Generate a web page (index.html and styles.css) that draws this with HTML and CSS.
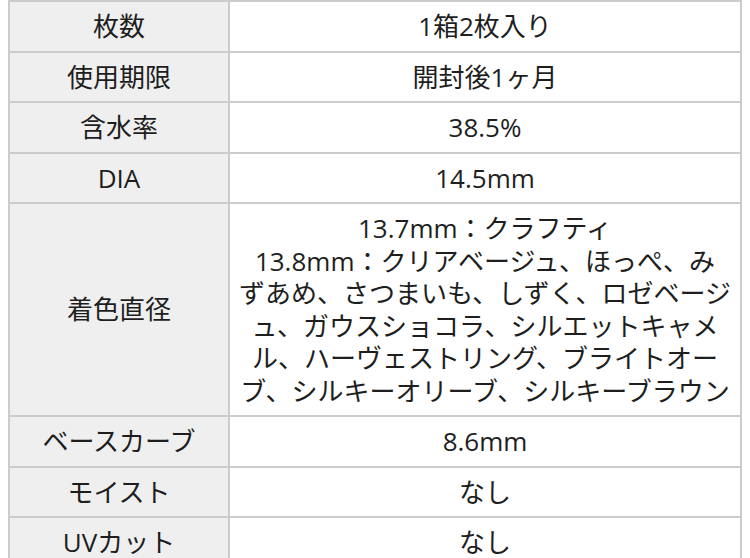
FILE: index.html
```html
<!DOCTYPE html>
<html lang="ja">
<head>
<meta charset="utf-8">
<link rel="stylesheet" href="styles.css">
</head>
<body>
<table class="spec">
  <colgroup><col class="col-label"><col class="col-value"></colgroup>
  <tr><th>枚数</th><td>1箱2枚入り</td></tr>
  <tr><th>使用期限</th><td>開封後1ヶ月</td></tr>
  <tr><th>含水率</th><td>38.5%</td></tr>
  <tr><th>DIA</th><td>14.5mm</td></tr>
  <tr><th>着色直径</th><td>13.7mm：クラフティ<br>13.8mm：クリアベージュ、ほっぺ、み<br>ずあめ、さつまいも、しずく、ロゼベージ<br>ュ、ガウスショコラ、シルエットキャメ<br>ル、ハーヴェストリング、ブライトオー<br>ブ、シルキーオリーブ、シルキーブラウン</td></tr>
  <tr><th>ベースカーブ</th><td>8.6mm</td></tr>
  <tr><th>モイスト</th><td>なし</td></tr>
  <tr><th>UVカット</th><td>なし</td></tr>
</table>
</body>
</html>
```

FILE: styles.css
```css
html, body {
  margin: 0;
  background: #ffffff;
}
body {
  padding: 0 8px;
  font-family: "Open Sans", "Noto Sans CJK JP", sans-serif;
  font-size: 26px;
  color: #1e1e1e;
}
.spec {
  width: 734px;
  border-collapse: collapse;
  table-layout: fixed;
}
.col-label {
  width: 220px;
}
.spec th,
.spec td {
  border: 2px solid #cccccc;
  padding: 8px 4px;
  line-height: 32.5px;
  text-align: center;
  vertical-align: middle;
  font-weight: normal;
  white-space: nowrap;
}
.spec th {
  background: #efefef;
}
.spec td {
  background: #ffffff;
}
```
